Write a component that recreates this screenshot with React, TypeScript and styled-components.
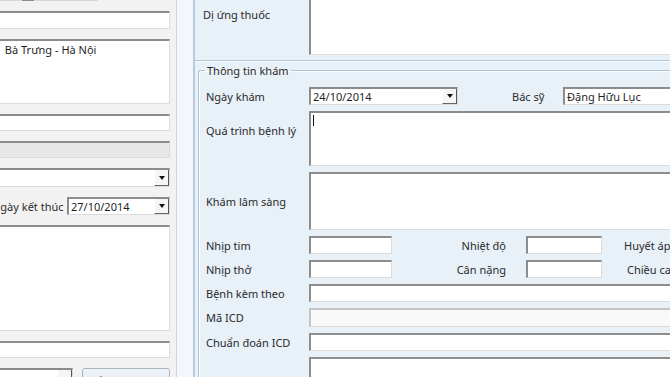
import React from "react";
import styled, { createGlobalStyle } from "styled-components";

const GlobalStyle = createGlobalStyle`
  html, body { margin: 0; padding: 0; background: #f3f3f3; }
  body {
    font-family: "Noto Sans", "DejaVu Sans", sans-serif;
    font-size: 11px;
    color: #2e2e2e;
  }
  * { box-sizing: border-box; }
`;

const Screen = styled.div`
  width: 670px;
  height: 377px;
  overflow: hidden;
  display: flex;
  background: #f3f3f3;
`;

/* ---------- left panel ---------- */

const LeftPanel = styled.div`
  flex: 0 0 179px;
  margin-left: -2px;
  display: flex;
  flex-direction: column;
  gap: 10px;
  padding-right: 6px;
  background: #f2f2f2;
  border-right: 1px solid #c7d7e6;
`;

const TopStub = styled.div`
  flex: 0 0 1px;
  background: linear-gradient(
    to right,
    #d6d6d6 0 24px,
    #8f8f8f 24px 36px,
    #d6d6d6 36px 100px,
    transparent 100px
  );
`;

const Field = styled.div<{ $h: number; $multi?: boolean; $tone?: "normal" | "gray" | "soft" }>`
  flex: 0 0 auto;
  height: ${(p) => p.$h}px;
  min-width: 0;
  display: flex;
  align-items: ${(p) => (p.$multi ? "flex-start" : "center")};
  padding: ${(p) => (p.$multi ? "1px 2px 0 2px" : "0 0 0 2px")};
  background: ${(p) => (p.$tone === "gray" ? "#e7e7e7" : p.$tone === "soft" ? "#f9f9f9" : "#fff")};
  border-top: 2px solid ${(p) => (p.$tone === "soft" ? "#c4c4c4" : "#8c8c8c")};
  border-left: 2px solid ${(p) => (p.$tone === "soft" ? "#c4c4c4" : "#8c8c8c")};
  border-right: 1px solid #dcdcdc;
  border-bottom: 1px solid #dcdcdc;
  color: #1f1f1f;
  white-space: nowrap;
  overflow: hidden;
  line-height: 15px;
`;

const FieldText = styled.span`
  flex: 1 1 auto;
  overflow: hidden;
`;

const DropButton = styled.div`
  flex: 0 0 15px;
  align-self: stretch;
  margin-left: auto;
  display: flex;
  align-items: center;
  justify-content: center;
  background: #f5f5f5;
  border-right: 1px solid #555;
  border-bottom: 1px solid #666;
  border-left: 1px solid #fff;
`;

const Arrow = styled.span`
  width: 0;
  height: 0;
  border-left: 3.5px solid transparent;
  border-right: 3.5px solid transparent;
  border-top: 4px solid #111;
`;

const DateRow = styled.div`
  flex: 0 0 18px;
  display: flex;
  align-items: center;
`;

const CutLabel = styled.span`
  margin-left: -6px;
  white-space: nowrap;
  color: #2a2a2a;
`;

const BottomRow = styled.div`
  flex: 0 0 24px;
  display: flex;
  gap: 9px;
`;

const ActionButton = styled.div`
  flex: 0 0 88px;
  height: 24px;
  border: 1px solid #a6b5c4;
  border-radius: 3px;
  background: linear-gradient(#f0f5fa, #dce5ee);
  display: flex;
  align-items: center;
  justify-content: center;
  color: #222;
  font-size: 11px;
  white-space: nowrap;
`;

/* ---------- splitter ---------- */

const Splitter = styled.div`
  flex: 0 0 16px;
  background: #f3f7fb;
`;

/* ---------- right panel ---------- */

const RightPanel = styled.div`
  flex: 0 0 520px;
  background: #e8f0f8;
  border-left: 2px solid #b6cadd;
  display: flex;
  flex-direction: column;
`;

const AllergyGroup = styled.div`
  flex: 0 0 61px;
  display: grid;
  grid-template-columns: 114px 1fr;
  align-items: start;
  border-bottom: 1px solid #afc5da;
  box-shadow: 0 1px 0 #fafcfe;
`;

const TopLabel = styled.span<{ $top: number; $left?: number }>`
  padding-top: ${(p) => p.$top}px;
  padding-left: ${(p) => p.$left ?? 0}px;
  line-height: 15px;
  white-space: nowrap;
  color: #2a2a2a;
`;

const ExamGroup = styled.fieldset`
  margin: 2px 0 0 3px;
  padding: 9px 0 0 7px;
  border: 1px solid #adc3d8;
  border-right: none;
  border-bottom: none;
  border-radius: 3px 0 0 0;
  box-shadow: inset 1px 1px 0 #fafcfe;
  min-inline-size: 0;
`;

const Legend = styled.legend`
  padding: 0 2px;
  margin-left: -1px;
  line-height: 15px;
  color: #2a2a2a;
`;

const FormGrid = styled.div`
  display: grid;
  grid-template-columns: 103px 1fr;
  row-gap: 6px;
  align-items: center;
`;

const RowLabel = styled.span<{ $top?: number }>`
  align-self: ${(p) => (p.$top !== undefined ? "start" : "center")};
  padding-top: ${(p) => p.$top ?? 0}px;
  line-height: 15px;
  white-space: nowrap;
  color: #2a2a2a;
`;

const Inline = styled.div`
  display: flex;
  align-items: center;
  min-width: 0;
`;

const InlineLabel = styled.span<{ $w?: number; $align?: "left" | "right"; $pad: number }>`
  flex: 0 0 ${(p) => (p.$w ? `${p.$w}px` : "auto")};
  text-align: ${(p) => p.$align ?? "left"};
  padding-left: ${(p) => (p.$align === "right" ? 0 : p.$pad)}px;
  padding-right: ${(p) => (p.$align === "right" ? p.$pad : 0)}px;
  white-space: nowrap;
  color: #2a2a2a;
`;

const Caret = styled.span`
  flex: 0 0 1px;
  height: 11px;
  margin: 1px 0 0 0;
  background: #111;
`;

const Grow = styled(Field)`
  flex: 1 1 auto;
`;

const Sized = styled(Field)<{ $w: number }>`
  flex: 0 0 ${(p) => p.$w}px;
`;

export default function App() {
  return (
    <>
      <GlobalStyle />
      <Screen>
        <LeftPanel>
          <TopStub />
          <Field $h={18} />
          <Field $h={65} $multi>
            <FieldText>&nbsp;Bà Trưng - Hà Nội</FieldText>
          </Field>
          <Field $h={17} />
          <Field $h={17} $tone="gray" />
          <Field $h={19}>
            <FieldText />
            <DropButton>
              <Arrow />
            </DropButton>
          </Field>
          <DateRow>
            <CutLabel>Ngày kết thúc</CutLabel>
            <Sized $h={18} $w={103} style={{ marginLeft: "auto" }}>
              <FieldText>27/10/2014</FieldText>
              <DropButton>
                <Arrow />
              </DropButton>
            </Sized>
          </DateRow>
          <Field $h={106} />
          <Field $h={17} />
          <BottomRow>
            <Sized $h={24} $w={75}>
              <FieldText />
              <DropButton>
                <Arrow />
              </DropButton>
            </Sized>
            <ActionButton>Kết thúc khám</ActionButton>
          </BottomRow>
        </LeftPanel>

        <Splitter />

        <RightPanel>
          <AllergyGroup>
            <TopLabel $top={7} $left={8}>Dị ứng thuốc</TopLabel>
            <Field $h={58} $multi style={{ marginTop: -3 }} />
          </AllergyGroup>

          <ExamGroup>
            <Legend>Thông tin khám</Legend>
            <FormGrid>
              <RowLabel>Ngày khám</RowLabel>
              <Inline>
                <Sized $h={18} $w={149}>
                  <FieldText>24/10/2014</FieldText>
                  <DropButton>
                    <Arrow />
                  </DropButton>
                </Sized>
                <InlineLabel $w={105} $pad={54}>Bác sỹ</InlineLabel>
                <Grow $h={18}>
                  <FieldText>Đặng Hữu Lục</FieldText>
                </Grow>
              </Inline>

              <RowLabel $top={12}>Quá trình bệnh lý</RowLabel>
              <Field $h={55} $multi>
                <Caret />
              </Field>

              <RowLabel>Khám lâm sàng</RowLabel>
              <Field $h={58} $multi />

              <RowLabel>Nhịp tim</RowLabel>
              <Inline>
                <Sized $h={18} $w={83} />
                <InlineLabel $w={134} $align="right" $pad={20}>Nhiệt độ</InlineLabel>
                <Sized $h={18} $w={76} />
                <InlineLabel $pad={22}>Huyết áp</InlineLabel>
              </Inline>

              <RowLabel>Nhịp thở</RowLabel>
              <Inline>
                <Sized $h={18} $w={83} />
                <InlineLabel $w={134} $align="right" $pad={20}>Cân nặng</InlineLabel>
                <Sized $h={18} $w={76} />
                <InlineLabel $pad={25}>Chiều cao</InlineLabel>
              </Inline>

              <RowLabel>Bệnh kèm theo</RowLabel>
              <Field $h={18} />

              <RowLabel>Mã ICD</RowLabel>
              <Field $h={19} $tone="soft" />

              <RowLabel>Chuẩn đoán ICD</RowLabel>
              <Field $h={18} />

              <RowLabel />
              <Field $h={40} $multi />
            </FormGrid>
          </ExamGroup>
        </RightPanel>
      </Screen>
    </>
  );
}
